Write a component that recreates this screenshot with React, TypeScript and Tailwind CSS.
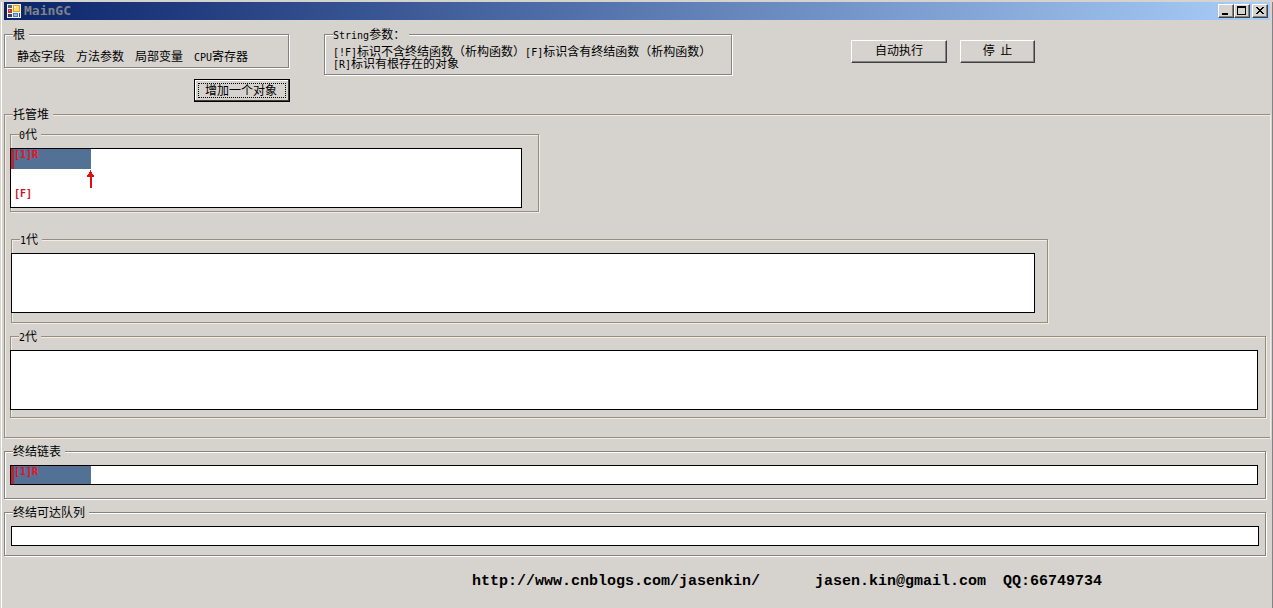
import type { ReactNode } from 'react'
import clsx from 'clsx'

const roots = ['静态字段', '方法参数', '局部变量']

function Latin({ children }: { children: ReactNode }) {
  return <span className="font-['DejaVu_Sans_Mono',monospace] text-[10px] leading-[6px]">{children}</span>
}

function GroupBox({
  title,
  warm,
  className,
  children,
}: {
  title: ReactNode
  warm?: boolean
  className?: string
  children: ReactNode
}) {
  return (
    <fieldset
      className={clsx(
        'min-w-0 border',
        warm
          ? 'border-[#968d82] shadow-[1px_1px_0_#f3ece2,inset_1px_1px_0_#f3ece2]'
          : 'border-[#848284] shadow-[1px_1px_0_#fff,inset_1px_1px_0_#fff]',
        className,
      )}
    >
      <legend className="ml-2 h-[13px] bg-[#d6d3ce] pr-1 leading-[11px] whitespace-nowrap">{title}</legend>
      {children}
    </fieldset>
  )
}

function Canvas({ className, children }: { className: string; children?: ReactNode }) {
  return <div className={clsx('relative border border-black bg-white', className)}>{children}</div>
}

function HeapObject({ label, className }: { label: string; className: string }) {
  return (
    <div
      className={clsx(
        "w-20 border-l-3 border-[#b0283a] bg-[#527194] font-['DejaVu_Sans_Mono',monospace] text-[10px] leading-3 font-bold text-[#f40c1c]",
        className,
      )}
    >
      {label}
    </div>
  )
}

function PushButton({ focused, className, children }: { focused?: boolean; className: string; children: ReactNode }) {
  return (
    <button
      type="button"
      className={clsx(
        'h-[23px] border bg-[#d6d3ce] text-center leading-3 whitespace-pre',
        focused
          ? 'border-black p-[3px] shadow-[inset_-1px_-1px_0_#404040,inset_1px_1px_0_#fff]'
          : 'border-t-white border-r-[#404040] border-b-[#404040] border-l-white pb-[3px] shadow-[inset_-1px_-1px_0_#848284]',
        className,
      )}
    >
      {focused ? (
        <span className="flex h-full items-center justify-center border border-dotted border-black pr-[2px] pb-[2px]">
          {children}
        </span>
      ) : (
        children
      )}
    </button>
  )
}

function CaptionButton({ label, className, children }: { label: string; className?: string; children: ReactNode }) {
  return (
    <button
      type="button"
      aria-label={label}
      className={clsx(
        'h-[14px] w-4 border border-t-white border-r-[#404040] border-b-[#404040] border-l-white bg-[#d6d3ce] shadow-[inset_-1px_-1px_0_#848284]',
        className,
      )}
    >
      <svg viewBox="0 0 14 12" className="block h-3 w-[14px]" shapeRendering="crispEdges">
        {children}
      </svg>
    </button>
  )
}

function AppIcon() {
  return (
    <svg viewBox="0 0 14 14" className="mr-[3px] size-[14px]" shapeRendering="crispEdges">
      <rect width="14" height="14" fill="#f4efe6" />
      <rect x="1" y="1" width="4" height="3" fill="#52627a" />
      <rect x="1" y="5" width="4" height="4" fill="#c8372c" />
      <rect x="2" y="6" width="1" height="1" fill="#f09a84" />
      <rect x="1" y="10" width="4" height="3" fill="#3c4658" />
      <rect x="6" y="1" width="7" height="7" fill="#d9a227" />
      <rect x="7" y="2" width="5" height="5" fill="#fbdc6a" />
      <rect x="7" y="2" width="2" height="2" fill="#fff3b4" />
      <rect x="6" y="9" width="5" height="4" fill="#3d7fd0" />
      <rect x="7" y="10" width="3" height="2" fill="#8fc0f4" />
      <rect x="12" y="9" width="1" height="4" fill="#3c4658" />
    </svg>
  )
}

export default function App() {
  return (
    <div className="flex min-h-screen bg-[#d6d3ce] pt-[2px] pl-px font-['Noto_Sans_CJK_SC',sans-serif] text-xs leading-3 text-black">
      <div className="min-w-0 flex-1 border-r border-l border-r-[#848284] border-l-white px-[2px]">
        <header className="flex h-[18px] items-center bg-linear-to-r/srgb from-[#0a246a] to-[#a9cef8] pr-[2px] pl-[3px]">
          <AppIcon />
          <h1 className="font-['DejaVu_Sans_Mono',monospace] text-[13px] leading-4 font-bold text-[#808488]">MainGC</h1>
          <div className="ml-auto flex">
            <CaptionButton label="最小化">
              <rect x="3" y="8" width="6" height="2" />
            </CaptionButton>
            <CaptionButton label="最大化">
              <path d="M2 1h9v9H2zM3 3v6h7V3z" fillRule="evenodd" />
            </CaptionButton>
            <CaptionButton label="关闭" className="ml-[2px]">
              <path d="M3 2h2v1h1v1h2V3h1V2h2v1h-1v1H9v1H8v1h1v1h1v1h1v1H9V8H8V7H6v1H5v1H3V8h1V7h1V6h1V5H5V4H4V3H3z" />
            </CaptionButton>
          </div>
        </header>

        <main>
          <div className="flex items-start pt-2">
            <div className="flex w-[286px] flex-col">
              <GroupBox title="根" className="mr-px">
                <div className="flex gap-[11px] pt-[9px] pb-[5px] pl-3 whitespace-nowrap">
                  {roots.map((root) => (
                    <span key={root}>{root}</span>
                  ))}
                  <span>
                    <Latin>CPU</Latin>寄存器
                  </span>
                </div>
              </GroupBox>
              <PushButton focused className="mt-[11px] w-24 self-end">
                增加一个对象
              </PushButton>
            </div>

            <GroupBox
              title={
                <>
                  <Latin>String</Latin>参数：
                </>
              }
              className="ml-[34px] w-[408px]"
            >
              <p className="pt-1 pb-[5px] pl-2 whitespace-nowrap">
                <Latin>[!F]</Latin>标识不含终结函数（析构函数）<Latin>[F]</Latin>标识含有终结函数（析构函数）
                <br />
                <Latin>[R]</Latin>标识有根存在的对象
              </p>
            </GroupBox>

            <div className="mt-3 ml-[119px] flex gap-[13px]">
              <PushButton className="w-24">自动执行</PushButton>
              <PushButton className="w-[75px]">{'停  止'}</PushButton>
            </div>
          </div>

          <GroupBox title="托管堆" warm className="mt-[6px] border-r-0">
            <div className="pt-[7px] pr-1 pb-[19px] pl-[5px]">
              <GroupBox
                warm
                className="w-[529px]"
                title={
                  <>
                    <Latin>0</Latin>代
                  </>
                }
              >
                <div className="pt-[7px] pr-4 pb-[3px]">
                  <Canvas className="-ml-px h-[60px]">
                    <HeapObject label="[1]R" className="h-5" />
                    <div className="mt-[19px] pl-[3px] font-['DejaVu_Sans_Mono',monospace] text-[10px] leading-3 font-bold text-[#c41420]">
                      [F]
                    </div>
                    {/* next object pointer */}
                    <svg
                      viewBox="0 0 7 18"
                      className="absolute top-[21px] left-[76px] h-[18px] w-[7px] fill-[#dc1010]"
                      shapeRendering="crispEdges"
                    >
                      <path d="M3 0h1v2h1v2h1v1h1v2H4.5v11h-2V7H0V5h1V4h1V2h1z" />
                    </svg>
                  </Canvas>
                </div>
              </GroupBox>
              <GroupBox
                warm
                className="mt-[21px] ml-px w-[1037px]"
                title={
                  <>
                    <Latin>1</Latin>代
                  </>
                }
              >
                <div className="pt-[7px] pr-3 pb-[9px]">
                  <Canvas className="-ml-px h-[60px]" />
                </div>
              </GroupBox>
              <GroupBox
                warm
                className="mt-[7px]"
                title={
                  <>
                    <Latin>2</Latin>代
                  </>
                }
              >
                <div className="pt-[7px] pr-[7px] pb-[7px]">
                  <Canvas className="-ml-px h-[60px]" />
                </div>
              </GroupBox>
            </div>
          </GroupBox>

          <GroupBox title="终结链表" className="mt-[7px] mr-1">
            <div className="pt-[7px] pr-[7px] pb-[13px] pl-[5px]">
              <Canvas className="h-5">
                <HeapObject label="[1]R" className="h-[18px]" />
              </Canvas>
            </div>
          </GroupBox>

          <GroupBox title="终结可达队列" className="mt-[7px] mr-1">
            <div className="pt-[7px] pr-[6px] pb-[9px] pl-[6px]">
              <Canvas className="h-5" />
            </div>
          </GroupBox>
        </main>

        <footer className="mt-[18px] flex pl-[468px] font-['Liberation_Mono',monospace] text-[15px] leading-4 font-bold whitespace-nowrap">
          <a href="http://www.cnblogs.com/jasenkin/">http://www.cnblogs.com/jasenkin/</a>
          <a href="mailto:jasen.kin@gmail.com" className="ml-[55px]">
            jasen.kin@gmail.com
          </a>
          <span className="ml-[17px]">QQ:66749734</span>
        </footer>
      </div>
    </div>
  )
}
